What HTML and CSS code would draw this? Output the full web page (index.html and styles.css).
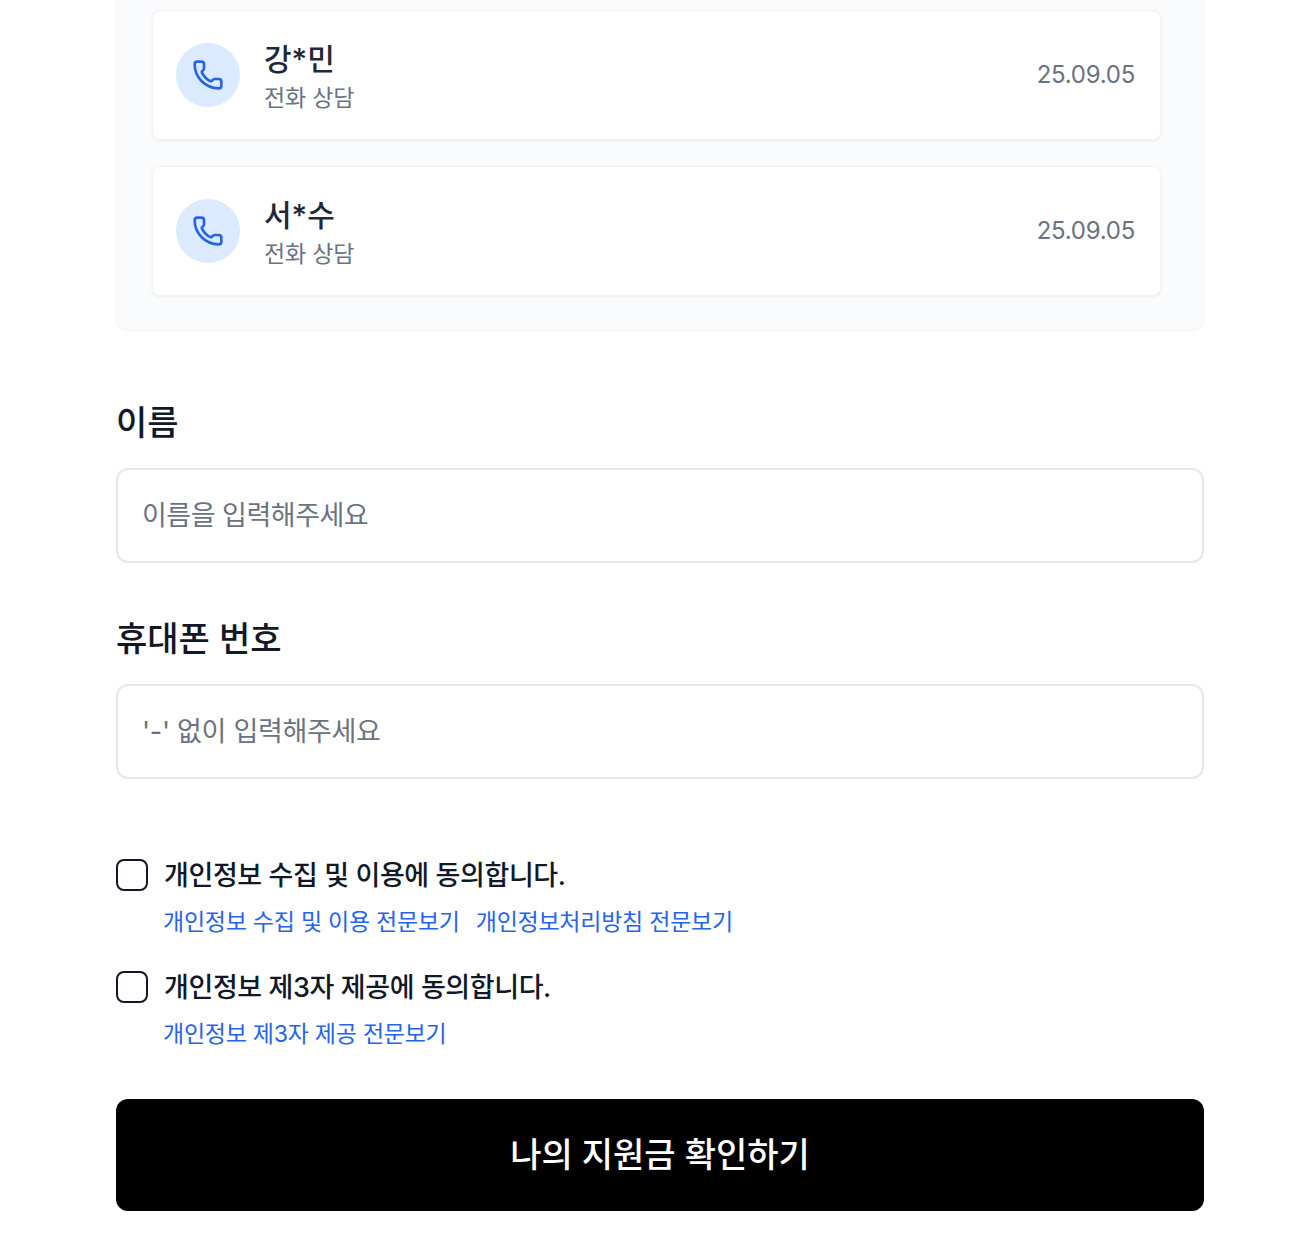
FILE: index.html
```html
<!DOCTYPE html>
<html lang="ko">
<head>
  <meta charset="UTF-8" />
  <title>나의 지원금 확인하기</title>
  <link rel="stylesheet" href="styles.css">
</head>
<body>
  <div class="container">
    <div class="history">
      <div class="history-card">
        <div class="call-icon">
          <svg width="32" height="32" viewBox="0 0 24 24" fill="none" stroke="#2563eb" stroke-width="2" stroke-linecap="round" stroke-linejoin="round"><path d="M13.832 16.568a1 1 0 0 0 1.213-.303l.355-.465A2 2 0 0 1 17 15h3a2 2 0 0 1 2 2v3a2 2 0 0 1-2 2A18 18 0 0 1 2 4a2 2 0 0 1 2-2h3a2 2 0 0 1 2 2v3a2 2 0 0 1-.8 1.6l-.468.351a1 1 0 0 0-.292 1.233 14 14 0 0 0 6.392 6.384"/></svg>
        </div>
        <div class="card-text">
          <div class="card-name">강*민</div>
          <div class="card-type">전화 상담</div>
        </div>
        <div class="card-date">25.09.05</div>
      </div>
      <div class="history-card">
        <div class="call-icon">
          <svg width="32" height="32" viewBox="0 0 24 24" fill="none" stroke="#2563eb" stroke-width="2" stroke-linecap="round" stroke-linejoin="round"><path d="M13.832 16.568a1 1 0 0 0 1.213-.303l.355-.465A2 2 0 0 1 17 15h3a2 2 0 0 1 2 2v3a2 2 0 0 1-2 2A18 18 0 0 1 2 4a2 2 0 0 1 2-2h3a2 2 0 0 1 2 2v3a2 2 0 0 1-.8 1.6l-.468.351a1 1 0 0 0-.292 1.233 14 14 0 0 0 6.392 6.384"/></svg>
        </div>
        <div class="card-text">
          <div class="card-name">서*수</div>
          <div class="card-type">전화 상담</div>
        </div>
        <div class="card-date">25.09.05</div>
      </div>
    </div>

    <form class="apply-form">
      <div class="field">
        <label class="field-label" for="userName">이름</label>
        <input id="userName" class="field-input" type="text" placeholder="이름을 입력해주세요">
      </div>
      <div class="field">
        <label class="field-label" for="userPhone">휴대폰 번호</label>
        <input id="userPhone" class="field-input phone-input" type="text" placeholder="'-' 없이 입력해주세요">
      </div>

      <div class="agree-list">
        <div class="agree">
          <div class="agree-row">
            <input id="agreePrivacy" class="agree-check" type="checkbox">
            <label class="agree-label" for="agreePrivacy">개인정보 수집 및 이용에 동의합니다.</label>
          </div>
          <div class="agree-links">
            <a href="#">개인정보 수집 및 이용 전문보기</a>
            <a href="#">개인정보처리방침 전문보기</a>
          </div>
        </div>
        <div class="agree">
          <div class="agree-row">
            <input id="agreeThird" class="agree-check" type="checkbox">
            <label class="agree-label" for="agreeThird">개인정보 제3자 제공에 동의합니다.</label>
          </div>
          <div class="agree-links">
            <a href="#">개인정보 제3자 제공 전문보기</a>
          </div>
        </div>
      </div>

      <button class="submit-btn" type="button">나의 지원금 확인하기</button>
    </form>
  </div>
</body>
</html>
```
FILE: styles.css
```css
body {
  font-family: Inter, "Noto Sans CJK KR", sans-serif;
  background-color: #fff;
  margin: 0;
  color: #111827;
}
.container {
  margin-left: 116px;
  width: 1088px;
}
.history {
  background-color: #fafbfc;
  border: 1px solid #f5f6f7;
  border-top: none;
  border-radius: 0 0 12px 12px;
  padding: 10px 42px 33px 35px;
  box-shadow: 0 1px 3px rgba(0,0,0,0.05);
  display: flex;
  flex-direction: column;
  gap: 26px;
}
.history-card {
  background-color: #fff;
  border: 1px solid #f3f4f6;
  border-radius: 8px;
  box-sizing: border-box;
  height: 130px;
  padding: 0 25px 0 23px;
  display: flex;
  align-items: center;
  box-shadow: 0 1px 3px rgba(0,0,0,0.07);
}
.call-icon {
  width: 64px;
  height: 64px;
  border-radius: 50%;
  background-color: #dbeafe;
  display: flex;
  align-items: center;
  justify-content: center;
  margin-right: 24px;
}
.card-text {
  flex: 1;
  padding-top: 4px;
}
.card-name {
  font-size: 30px;
  font-weight: 500;
  line-height: 40px;
  color: #1f2937;
}
.card-type {
  font-size: 23px;
  letter-spacing: -0.2px;
  line-height: 34px;
  color: #6b7280;
  margin-top: 2px;
}
.card-date {
  font-size: 24px;
  letter-spacing: -0.25px;
  color: #6b7280;
  padding-bottom: 2px;
}
.apply-form {
  margin-top: 69px;
}
.field {
  margin-bottom: 52px;
}
.field-label {
  display: block;
  font-size: 34px;
  font-weight: 500;
  line-height: 48px;
  margin-bottom: 21px;
  color: #111827;
}
.field-input {
  display: block;
  box-sizing: border-box;
  width: 100%;
  height: 95px;
  padding: 0 24px;
  border: 2px solid #e5e7eb;
  border-radius: 12px;
  font-family: inherit;
  font-size: 27px;
  letter-spacing: -0.5px;
  outline: none;
}
.phone-input {
  letter-spacing: -0.3px;
}
.field-input::placeholder {
  color: #6b7280;
}
.agree-list {
  margin-top: 76px;
}
.agree {
  margin-bottom: 27px;
}
.agree-row {
  display: flex;
  align-items: center;
  gap: 16px;
}
.agree-check {
  appearance: none;
  width: 32px;
  height: 32px;
  margin: 0;
  border: 2px solid #111827;
  border-radius: 8px;
  background-color: #fff;
}
.agree-label {
  font-size: 27px;
  letter-spacing: -0.4px;
  font-weight: 500;
  line-height: 38px;
  padding-top: 2px;
  color: #111827;
}
.agree-links {
  display: flex;
  gap: 16px;
  margin: 9px 0 0 47px;
  line-height: 36px;
}
.agree-links a {
  font-size: 23px;
  letter-spacing: -0.25px;
  color: #2563eb;
  text-decoration: none;
}
.submit-btn {
  display: block;
  width: 100%;
  height: 112px;
  margin-top: 47px;
  padding: 0 0 6px;
  background-color: #000;
  color: #fff;
  border: none;
  border-radius: 12px;
  font-family: inherit;
  font-size: 34px;
  font-weight: 500;
}
```
